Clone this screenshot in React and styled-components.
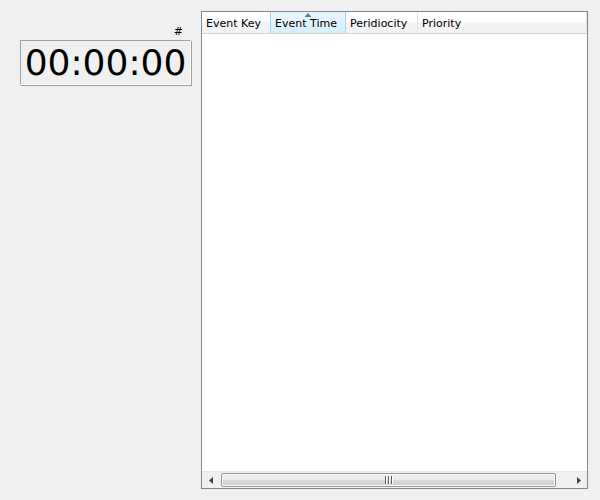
import React from 'react'
import styled, { createGlobalStyle } from 'styled-components'

const GlobalStyle = createGlobalStyle`
  html, body {
    margin: 0;
    padding: 0;
    background: #f0f0f0;
  }
  body {
    font-family: "DejaVu Sans", "Liberation Sans", sans-serif;
  }
`

const StyledPage = styled.div`
  display: flex;
  width: 600px;
  height: 500px;
  padding-top: 11px;
  box-sizing: border-box;
  background: #f0f0f0;
`

const StyledClockPanel = styled.div`
  width: 201px;
  padding-right: 10px;
  padding-top: 13px;
  box-sizing: border-box;
  display: flex;
  flex-direction: column;
  align-items: flex-end;
`

const StyledHash = styled.div`
  font-size: 11px;
  line-height: 15px;
  height: 16px;
  margin-right: 8px;
  color: #000;
`

const StyledClock = styled.div`
  width: 171px;
  height: 45px;
  box-sizing: border-box;
  border: 1px solid #a0a0a0;
  border-right-color: #ffffff;
  border-bottom-color: #ffffff;
  box-shadow: 1px 1px 0 #a0a0a0;
  display: flex;
  align-items: center;
  justify-content: center;
  font-size: 36px;
  color: #000;
`

const StyledTable = styled.div`
  width: 387px;
  height: 478px;
  box-sizing: border-box;
  border: 1px solid #828790;
  background: #ffffff;
  display: flex;
  flex-direction: column;
`

const StyledHeader = styled.div`
  display: flex;
  height: 21px;
  border-bottom: 1px solid #d5d5d5;
  background: linear-gradient(#ffffff 0%, #ffffff 45%, #f3f4f6 50%, #f1f2f4 100%);
`

const StyledHeaderCell = styled.div`
  position: relative;
  width: ${({ width }) => (width ? `${width}px` : 'auto')};
  flex: ${({ width }) => (width ? 'none' : '1')};
  box-sizing: border-box;
  padding: 2px 0 0 4px;
  font-size: 11px;
  line-height: 19px;
  color: #000;
  white-space: nowrap;
  border-right: 1px solid ${({ sorted }) => (sorted ? '#96d9f9' : '#e3e4e6')};
  border-left: ${({ sorted }) => (sorted ? '1px solid #96d9f9' : '0')};
  background: ${({ sorted }) =>
    sorted ? 'linear-gradient(#e8f6fd 0%, #e3f3fc 50%, #d6eefb 100%)' : 'transparent'};
  ${({ sorted }) => (sorted ? 'margin-left: -1px;' : '')}
`

const StyledSortArrow = styled.svg`
  position: absolute;
  top: 1px;
  left: 50%;
  transform: translateX(-50%);
`

const StyledBody = styled.div`
  flex: 1;
  background: #ffffff;
`

const StyledScrollbar = styled.div`
  display: flex;
  align-items: stretch;
  height: 17px;
  background: #f0f0f0;
  border-top: 1px solid #e6e6e6;
  box-sizing: border-box;
`

const StyledArrowButton = styled.div`
  width: 17px;
  display: flex;
  align-items: center;
  justify-content: center;
`

const StyledTrack = styled.div`
  flex: 1;
  display: flex;
  padding: 1px 14px 1px 2px;
`

const StyledThumb = styled.div`
  flex: 1;
  box-sizing: border-box;
  border: 1px solid #979797;
  border-radius: 2px;
  background: linear-gradient(#f2f2f2 0%, #ebebeb 45%, #d8d8d8 55%, #cfcfcf 100%);
  box-shadow: inset 0 0 0 1px #fafafa;
  display: flex;
  align-items: center;
  justify-content: center;
`

const StyledGrip = styled.div`
  display: flex;
  gap: 2px;
`

const StyledGripLine = styled.span`
  width: 1px;
  height: 8px;
  background: #5f5f5f;
  box-shadow: 1px 0 0 #ffffff;
`

const columns = [
  { label: 'Event Key', width: 69 },
  { label: 'Event Time', width: 76, sorted: true },
  { label: 'Peridiocity', width: 72 },
  { label: 'Priority' },
]

const App = () => (
  <>
    <GlobalStyle />
    <StyledPage>
      <StyledClockPanel>
        <StyledHash>#</StyledHash>
        <StyledClock>00:00:00</StyledClock>
      </StyledClockPanel>
      <StyledTable>
        <StyledHeader>
          {columns.map(col => (
            <StyledHeaderCell key={col.label} width={col.width} sorted={col.sorted}>
              {col.sorted && (
                <StyledSortArrow width="7" height="4" viewBox="0 0 7 4">
                  <path d="M0 4 L3.5 0 L7 4 Z" fill="#5a7d92" />
                </StyledSortArrow>
              )}
              {col.label}
            </StyledHeaderCell>
          ))}
        </StyledHeader>
        <StyledBody />
        <StyledScrollbar>
          <StyledArrowButton>
            <svg width="4" height="7" viewBox="0 0 4 7">
              <path d="M4 0 L0 3.5 L4 7 Z" fill="#404040" />
            </svg>
          </StyledArrowButton>
          <StyledTrack>
            <StyledThumb>
              <StyledGrip>
                <StyledGripLine />
                <StyledGripLine />
                <StyledGripLine />
              </StyledGrip>
            </StyledThumb>
          </StyledTrack>
          <StyledArrowButton>
            <svg width="4" height="7" viewBox="0 0 4 7">
              <path d="M0 0 L4 3.5 L0 7 Z" fill="#404040" />
            </svg>
          </StyledArrowButton>
        </StyledScrollbar>
      </StyledTable>
    </StyledPage>
  </>
)

export default App
